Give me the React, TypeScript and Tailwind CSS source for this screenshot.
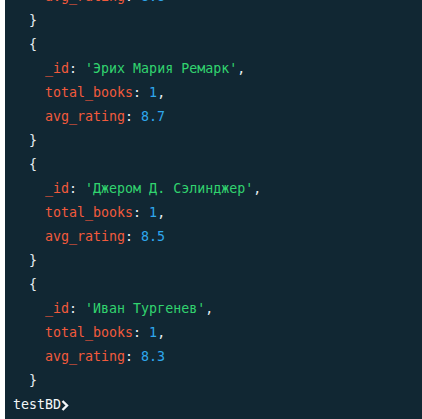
import React from "react";

type Doc = { id: string; rating: string };

const docs: Doc[] = [
  { id: "Эрих Мария Ремарк", rating: "8.7" },
  { id: "Джером Д. Сэлинджер", rating: "8.5" },
  { id: "Иван Тургенев", rating: "8.3" },
];

const K = ({ children }: { children: React.ReactNode }) => (
  <span className="text-[#f25a3c]">{children}</span>
);
const P = ({ children }: { children: React.ReactNode }) => (
  <span className="text-[#e8eef2]">{children}</span>
);
const S = ({ children }: { children: React.ReactNode }) => (
  <span className="text-[#31d46f]">{children}</span>
);
const N = ({ children }: { children: React.ReactNode }) => (
  <span className="text-[#2ea8ee]">{children}</span>
);

export default function App() {
  return (
    <div className="w-[422px] h-[419px] overflow-hidden bg-white flex">
      <div className="w-[5px] shrink-0 bg-white" />
      <div
        className="flex-1 bg-[#112733] overflow-hidden pl-[8px] text-[13.3px] leading-[24px] whitespace-pre"
        style={{ fontFamily: '"DejaVu Sans Mono", "Liberation Mono", monospace' }}
      >
        <div className="mt-[-15px]">
          <div>
            {"    "}
            <K>avg_rating</K>
            <P>: </P>
            <N>8.8</N>
          </div>
          <div>
            <P>{"  }"}</P>
          </div>
          {docs.map((d) => (
            <React.Fragment key={d.id}>
              <div>
                <P>{"  {"}</P>
              </div>
              <div>
                {"    "}
                <K>_id</K>
                <P>: </P>
                <S>{`'${d.id}'`}</S>
                <P>,</P>
              </div>
              <div>
                {"    "}
                <K>total_books</K>
                <P>: </P>
                <N>1</N>
                <P>,</P>
              </div>
              <div>
                {"    "}
                <K>avg_rating</K>
                <P>: </P>
                <N>{d.rating}</N>
              </div>
              <div>
                <P>{"  }"}</P>
              </div>
            </React.Fragment>
          ))}
          <div className="flex items-center">
            <span className="text-[#f4f7f9]">testBD</span>
            <svg width="8" height="13" viewBox="0 0 8 13">
              <path d="M1.5 2 L6 6.5 L1.5 11" stroke="#f4f7f9" strokeWidth="2.4" fill="none" />
            </svg>
          </div>
        </div>
      </div>
    </div>
  );
}
